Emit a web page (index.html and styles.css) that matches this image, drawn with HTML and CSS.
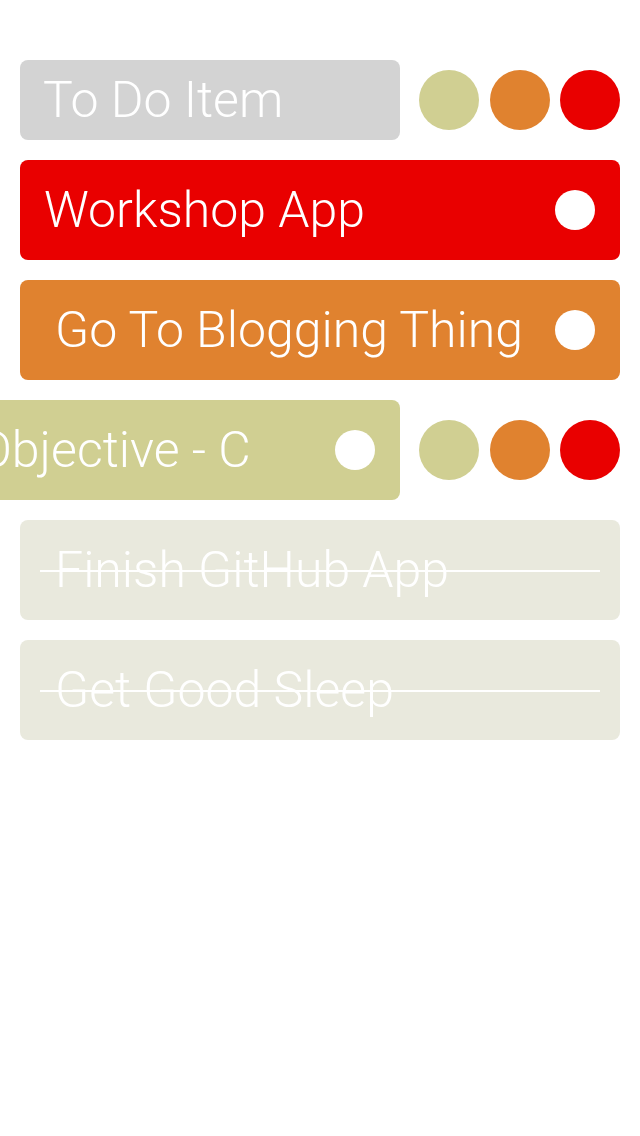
FILE: index.html
```html
<!DOCTYPE html>
<html>
<head>
<meta charset="utf-8">
<link rel="stylesheet" href="styles.css">
</head>
<body>
<div class="list">
  <div class="row">
    <div class="item item-new"><span class="label">To Do Item</span></div>
    <div class="swatches">
      <span class="swatch olive"></span>
      <span class="swatch orange"></span>
      <span class="swatch red"></span>
    </div>
  </div>
  <div class="row">
    <div class="item red full pad-a"><span class="label">Workshop App</span><span class="dot"></span></div>
  </div>
  <div class="row">
    <div class="item orange full pad-b"><span class="label">Go To Blogging Thing</span><span class="dot"></span></div>
  </div>
  <div class="row">
    <div class="item olive slid"><span class="label">Objective - C</span><span class="dot"></span></div>
    <div class="swatches">
      <span class="swatch olive"></span>
      <span class="swatch orange"></span>
      <span class="swatch red"></span>
    </div>
  </div>
  <div class="row">
    <div class="item done full pad-b"><span class="label">Finish GitHub App</span><span class="strike"></span></div>
  </div>
  <div class="row">
    <div class="item done full pad-b"><span class="label">Get Good Sleep</span><span class="strike"></span></div>
  </div>
</div>
</body>
</html>
```
FILE: styles.css
```css
html, body {
  margin: 0;
  padding: 0;
  background: #ffffff;
}
body {
  width: 640px;
  height: 1136px;
  overflow: hidden;
  font-family: Roboto, "Liberation Sans", sans-serif;
  font-weight: 300;
}
.list {
  display: flex;
  flex-direction: column;
  gap: 20px;
  padding: 60px 20px 0 20px;
}
.row {
  display: flex;
  align-items: center;
  gap: 19px;
}
.item {
  position: relative;
  display: flex;
  align-items: center;
  flex-shrink: 0;
  height: 100px;
  border-radius: 8px;
  color: #ffffff;
  font-size: 50px;
  box-sizing: border-box;
}
.label {
  white-space: nowrap;
  line-height: 1;
}
.item-new {
  width: 380px;
  height: 80px;
  background: #d3d3d3;
  padding-left: 23px;
}
.full {
  width: 600px;
}
.pad-a { padding-left: 24px; }
.pad-b { padding-left: 35px; }
.red { background: #e90000; }
.orange { background: #e0822f; }
.olive { background: #d0cf92; }
.done { background: #e9e9dd; }
.slid {
  width: 600px;
  margin-left: -220px;
  padding-left: 178px;
}
.dot {
  position: absolute;
  right: 25px;
  top: 30px;
  width: 40px;
  height: 40px;
  border-radius: 50%;
  background: #ffffff;
}
.swatches {
  display: flex;
  flex-shrink: 0;
  gap: 10.5px;
}
.swatch {
  width: 60px;
  height: 60px;
  border-radius: 50%;
}
.strike {
  position: absolute;
  left: 20px;
  right: 20px;
  top: 50px;
  height: 2px;
  background: #ffffff;
}
```
